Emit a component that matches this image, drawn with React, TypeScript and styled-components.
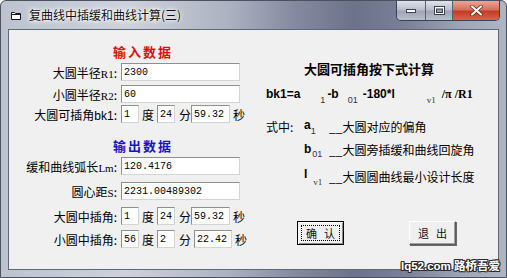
import styled, { createGlobalStyle } from 'styled-components'

const GlobalStyle = createGlobalStyle`
  html, body {
    margin: 0;
    padding: 0;
    background: #ffffff;
  }
  body {
    font-family: "Noto Sans CJK SC", "Liberation Sans", sans-serif;
  }
`

const cjk = `"Noto Sans CJK SC", "Liberation Sans", sans-serif`
const mono = `"Liberation Mono", "DejaVu Sans Mono", monospace`
const serif = `"Liberation Serif", "Noto Sans CJK SC", serif`

const Window = styled.div`
  position: relative;
  width: 507px;
  height: 278px;
  box-sizing: border-box;
  display: flex;
  flex-direction: column;
  padding: 0 7px 7px;
  border: 1px solid #4a5160;
  border-radius: 6px 6px 0 0;
  background: linear-gradient(
    90deg,
    #bcc3cf 0%,
    #cdd2db 25%,
    #adb2c1 45%,
    #858aa0 58%,
    #6c7289 70%,
    #7a8097 80%,
    #a0a8b8 92%,
    #aeb6c4 100%
  );
  overflow: hidden;
`

const TitleBar = styled.div`
  height: 28px;
  flex-shrink: 0;
  display: flex;
  align-items: flex-start;
`

const TitleIcon = styled.svg`
  width: 12px;
  height: 11px;
  margin: 9px 7px 0 2px;
  flex-shrink: 0;
`

const TitleText = styled.div`
  margin-top: 5px;
  font-family: ${cjk};
  font-size: 12px;
  line-height: 18px;
  color: #101010;
  text-shadow: 0 0 6px #ffffff, 0 0 4px #ffffff, 0 0 2px #ffffff;
  white-space: nowrap;
`

const Caption = styled.div`
  margin-left: auto;
  margin-right: -1px;
  display: flex;
  height: 19px;
  border: 1px solid #3a4150;
  border-top: none;
  border-radius: 0 0 5px 5px;
  overflow: hidden;
`

const CapButton = styled.div<{ $w: number; $close?: boolean }>`
  width: ${({ $w }) => $w}px;
  height: 100%;
  display: flex;
  align-items: center;
  justify-content: center;
  box-sizing: border-box;
  border-left: ${({ $close }) => ($close ? '1px solid #3a4150' : 'none')};
  background: ${({ $close }) =>
    $close
      ? 'linear-gradient(180deg, #e8a695 0%, #d7705d 45%, #c43c25 55%, #d5664a 100%)'
      : 'linear-gradient(180deg, #dfe3ea 0%, #b9c0cc 45%, #9ea6b5 55%, #b8c0cd 100%)'};
  & + & {
    border-left: 1px solid #59606f;
  }
`

const Client = styled.div`
  flex: 1;
  display: flex;
  background: #f0f0f0;
  border: 1px solid #5f6878;
`

const LeftPanel = styled.div`
  width: 250px;
  flex-shrink: 0;
  display: flex;
  flex-direction: column;
`

const SectionTitle = styled.div<{ $color: string; $mt: number }>`
  margin-top: ${({ $mt }) => $mt}px;
  margin-left: 104px;
  height: 14px;
  line-height: 14px;
  font-family: ${cjk};
  font-size: 13px;
  font-weight: 700;
  letter-spacing: 2px;
  color: ${({ $color }) => $color};
`

const Row = styled.div<{ $mt: number }>`
  margin-top: ${({ $mt }) => $mt}px;
  height: 18px;
  display: flex;
  align-items: center;
`

const Label = styled.div`
  width: 108px;
  margin-right: 4px;
  flex-shrink: 0;
  text-align: right;
  white-space: nowrap;
  font-family: ${cjk};
  font-size: 12px;
  color: #000;
`

const Latin = styled.span<{ $serif?: boolean }>`
  font-family: ${({ $serif }) => ($serif ? serif : `"Liberation Sans", sans-serif`)};
  font-size: ${({ $serif }) => ($serif ? 11 : 12)}px;
`

const Field = styled.input<{ $w: number }>`
  width: ${({ $w }) => $w}px;
  height: 18px;
  box-sizing: border-box;
  margin: 0;
  padding: 0 0 0 2px;
  flex-shrink: 0;
  background: #ffffff;
  border: 1px solid;
  border-color: #8f8f8f #d4d4d4 #d4d4d4 #8f8f8f;
  font-family: ${mono};
  font-size: 10px;
  color: #000;
  outline: none;
`

const Unit = styled.span<{ $ml: number; $mr: number }>`
  margin: 0 ${({ $mr }) => $mr}px 0 ${({ $ml }) => $ml}px;
  font-family: ${cjk};
  font-size: 12px;
  color: #000;
`

const RightPanel = styled.div`
  flex: 1;
  display: flex;
  flex-direction: column;
  padding-left: 7px;
`

const Heading = styled.div`
  margin: 32px 0 0 38px;
  height: 14px;
  line-height: 14px;
  font-family: ${cjk};
  font-size: 13px;
  font-weight: 700;
  color: #000;
`

const Formula = styled.div<{ $mt: number }>`
  margin-top: ${({ $mt }) => $mt}px;
  height: 14px;
  line-height: 14px;
  white-space: nowrap;
  font-family: "Liberation Sans", sans-serif;
  font-size: 12px;
  color: #000;
`

const Bold = styled.span<{ $ml?: number; $serif?: boolean }>`
  margin-left: ${({ $ml }) => $ml ?? 0}px;
  font-family: ${({ $serif }) => ($serif ? serif : `"Liberation Sans", sans-serif`)};
  font-weight: 700;
`

const Sub = styled.span<{ $ml?: number; $mr?: number; $drop: number; $serif?: boolean }>`
  display: inline-block;
  margin-left: ${({ $ml }) => $ml ?? 0}px;
  margin-right: ${({ $mr }) => $mr ?? 0}px;
  vertical-align: -${({ $drop }) => $drop}px;
  font-family: ${({ $serif }) => ($serif ? serif : `"Liberation Sans", sans-serif`)};
  font-size: 9px;
  line-height: 9px;
  color: #333;
`

const Legend = styled.div<{ $mt: number }>`
  margin-top: ${({ $mt }) => $mt}px;
  height: 14px;
  line-height: 14px;
  display: grid;
  grid-template-columns: 38px 25px auto;
  align-items: center;
  white-space: nowrap;
  font-family: ${cjk};
  font-size: 12px;
  color: #000;
`

const Symbol = styled.span`
  font-family: "Liberation Sans", sans-serif;
  font-size: 12px;
  font-weight: 700;
`

const ButtonRow = styled.div`
  margin-top: 41px;
  padding-left: 31px;
  display: flex;
  gap: 65px;
`

const PushButton = styled.button<{ $default?: boolean }>`
  width: 47px;
  height: 24px;
  margin: 0;
  padding: 0;
  box-sizing: border-box;
  position: relative;
  background: #f0f0f0;
  border: 1px solid;
  border-color: ${({ $default }) =>
    $default ? '#000 #000 #000 #000' : '#ffffff #5a5a5a #5a5a5a #ffffff'};
  box-shadow: ${({ $default }) =>
    $default
      ? 'inset 1px 1px 0 #ffffff, inset -1px -1px 0 #8a8a8a'
      : 'inset -1px -1px 0 #a0a0a0, 1px 1px 0 #6a6a6a'};
  font-family: ${cjk};
  font-size: 11px;
  font-weight: 400;
  letter-spacing: 7px;
  text-indent: 7px;
  color: #111;
  display: flex;
  align-items: center;
  justify-content: center;
`

const FocusRing = styled.span`
  position: absolute;
  inset: 3px;
  border: 1px dotted #000;
  pointer-events: none;
`

const Watermark = styled.div`
  position: absolute;
  right: 6px;
  bottom: 4px;
  font-family: "Liberation Sans", "Noto Sans CJK SC", sans-serif;
  font-size: 11.5px;
  font-weight: 700;
  color: #ffffff;
  white-space: nowrap;
  text-shadow: 1px 0 0 #2a2a2a, -1px 0 0 #2a2a2a, 0 1px 0 #2a2a2a, 0 -1px 0 #2a2a2a,
    1px 1px 0 #2a2a2a, -1px -1px 0 #2a2a2a, 1px -1px 0 #2a2a2a, -1px 1px 0 #2a2a2a;
`

type AngleProps = {
  label: React.ReactNode
  mt: number
  deg: string
  min: string
  sec: string
  secGap?: number
  secWidth?: number
}

function AngleRow({ label, mt, deg, min, sec, secGap = 0, secWidth = 39 }: AngleProps) {
  return (
    <Row $mt={mt}>
      <Label>{label}</Label>
      <Field $w={18} value={deg} readOnly />
      <Unit $ml={3} $mr={3}>度</Unit>
      <Field $w={18} value={min} readOnly />
      <Unit $ml={4} $mr={secGap}>分</Unit>
      <Field $w={secWidth} value={sec} readOnly />
      <Unit $ml={3} $mr={0}>秒</Unit>
    </Row>
  )
}

export default function App() {
  return (
    <>
      <GlobalStyle />
      <Window>
        <TitleBar>
          <TitleIcon viewBox="0 0 12 11">
            <path d="M1.5 2.5h3l1 1h5v6h-9z" fill="#ffffff" stroke="#1a1a1a" strokeWidth="1" />
            <path d="M1.5 4.5h9" stroke="#1a1a1a" strokeWidth="1" />
          </TitleIcon>
          <TitleText>复曲线中插缓和曲线计算(三)</TitleText>
          <Caption>
            <CapButton $w={28}>
              <svg width="10" height="4" viewBox="0 0 10 4">
                <rect x="0.5" y="0.5" width="9" height="3" fill="#ffffff" stroke="#3a4150" />
              </svg>
            </CapButton>
            <CapButton $w={27}>
              <svg width="11" height="9" viewBox="0 0 11 9">
                <rect x="0.5" y="0.5" width="10" height="8" fill="#ffffff" stroke="#3a4150" />
                <rect x="2.5" y="3" width="6" height="3.5" fill="#9aa2b0" stroke="#3a4150" />
              </svg>
            </CapButton>
            <CapButton $w={47} $close>
              <svg width="13" height="11" viewBox="0 0 13 11">
                <path
                  d="M2 1.5 L11 9.5 M11 1.5 L2 9.5"
                  stroke="#5a1a10"
                  strokeWidth="3.4"
                  strokeLinecap="round"
                />
                <path
                  d="M2 1.5 L11 9.5 M11 1.5 L2 9.5"
                  stroke="#ffffff"
                  strokeWidth="2.2"
                  strokeLinecap="round"
                />
              </svg>
            </CapButton>
          </Caption>
        </TitleBar>

        <Client>
          <LeftPanel>
            <SectionTitle $color="#e00d0d" $mt={15}>输入数据</SectionTitle>
            <Row $mt={4}>
              <Label>
                大圆半径<Latin $serif>R1</Latin>:
              </Label>
              <Field $w={119} value="2300" readOnly />
            </Row>
            <Row $mt={4}>
              <Label>
                小圆半径<Latin $serif>R2</Latin>:
              </Label>
              <Field $w={119} value="60" readOnly />
            </Row>
            <AngleRow
              mt={2}
              label={
                <>
                  大圆可插角<Latin>bk1</Latin>:
                </>
              }
              deg="1"
              min="24"
              sec="59.32"
            />

            <SectionTitle $color="#1414c8" $mt={16}>输出数据</SectionTitle>
            <Row $mt={4}>
              <Label>
                缓和曲线弧长<Latin $serif>Lm</Latin>:
              </Label>
              <Field $w={119} value="120.4176" readOnly />
            </Row>
            <Row $mt={7}>
              <Label>
                圆心距<Latin $serif>S</Latin>:
              </Label>
              <Field $w={119} value="2231.00489302" readOnly />
            </Row>
            <AngleRow mt={7} label="大圆中插角:" deg="1" min="24" sec="59.32" />
            <AngleRow mt={5} label="小圆中插角:" deg="56" min="2" sec="22.42" secGap={3} secWidth={38} />
          </LeftPanel>

          <RightPanel>
            <Heading>大圆可插角按下式计算</Heading>
            <Formula $mt={11}>
              <Bold>bk1=a</Bold>
              <Sub $ml={20} $mr={2} $drop={5}>1</Sub>
              <Bold>-b</Bold>
              <Sub $ml={9} $drop={5}>01</Sub>
              <Bold $ml={5}>-180*l</Bold>
              <Sub $ml={32} $drop={5} $serif>v1</Sub>
              <Bold $ml={6} $serif>/π /R1</Bold>
            </Formula>

            <Legend $mt={16}>
              <span>式中:</span>
              <span>
                <Symbol>a</Symbol>
                <Sub $drop={5}>1</Sub>
              </span>
              <span>__大圆对应的偏角</span>
            </Legend>
            <Legend $mt={10}>
              <span />
              <span>
                <Symbol>b</Symbol>
                <Sub $ml={1} $drop={4}>01</Sub>
              </span>
              <span>__大圆旁插缓和曲线回旋角</span>
            </Legend>
            <Legend $mt={11}>
              <span />
              <span>
                <Symbol>l</Symbol>
                <Sub $ml={6} $drop={7} $serif>v1</Sub>
              </span>
              <span>__大圆圆曲线最小设计长度</span>
            </Legend>

            <ButtonRow>
              <PushButton $default>
                确认
                <FocusRing />
              </PushButton>
              <PushButton>退出</PushButton>
            </ButtonRow>
          </RightPanel>
        </Client>

        <Watermark>lq52.com 路桥吾爱</Watermark>
      </Window>
    </>
  )
}
